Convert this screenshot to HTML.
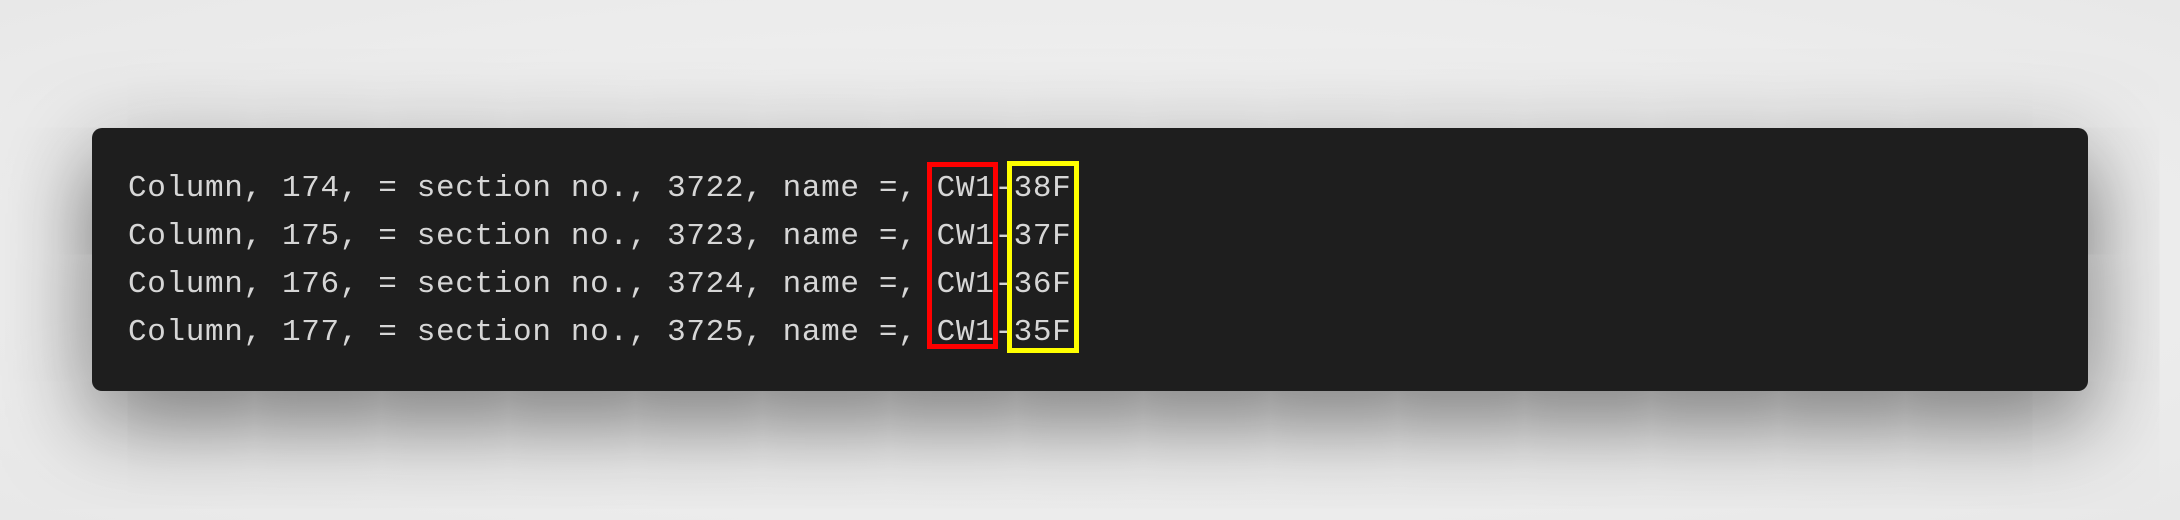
<!DOCTYPE html><html><head><style>
body{margin:0;width:2180px;height:520px;background:radial-gradient(ellipse at center,#f4f4f4 0%,#ececec 70%,#e8e8e8 100%);overflow:hidden;position:relative;font-family:"Liberation Mono",monospace}
.box{position:absolute;left:92px;top:128px;width:1996px;height:263px;background:#1e1e1e;border-radius:10px;box-shadow:0 28px 90px rgba(0,0,0,.55)}
.t{position:absolute;left:128px;top:165px;color:#d6d6d6;font-size:31px;letter-spacing:0.65px;line-height:48px;white-space:pre}
.r{position:absolute;left:927px;top:162px;width:61px;height:177px;border:5px solid #f00}
.y{position:absolute;left:1007px;top:161px;width:62px;height:182px;border:5px solid #ff0}
</style></head><body>
<div class="box"></div>
<div class="t">Column, 174, = section no., 3722, name =, CW1-38F
Column, 175, = section no., 3723, name =, CW1-37F
Column, 176, = section no., 3724, name =, CW1-36F
Column, 177, = section no., 3725, name =, CW1-35F</div>
<div class="r"></div><div class="y"></div>
</body></html>
